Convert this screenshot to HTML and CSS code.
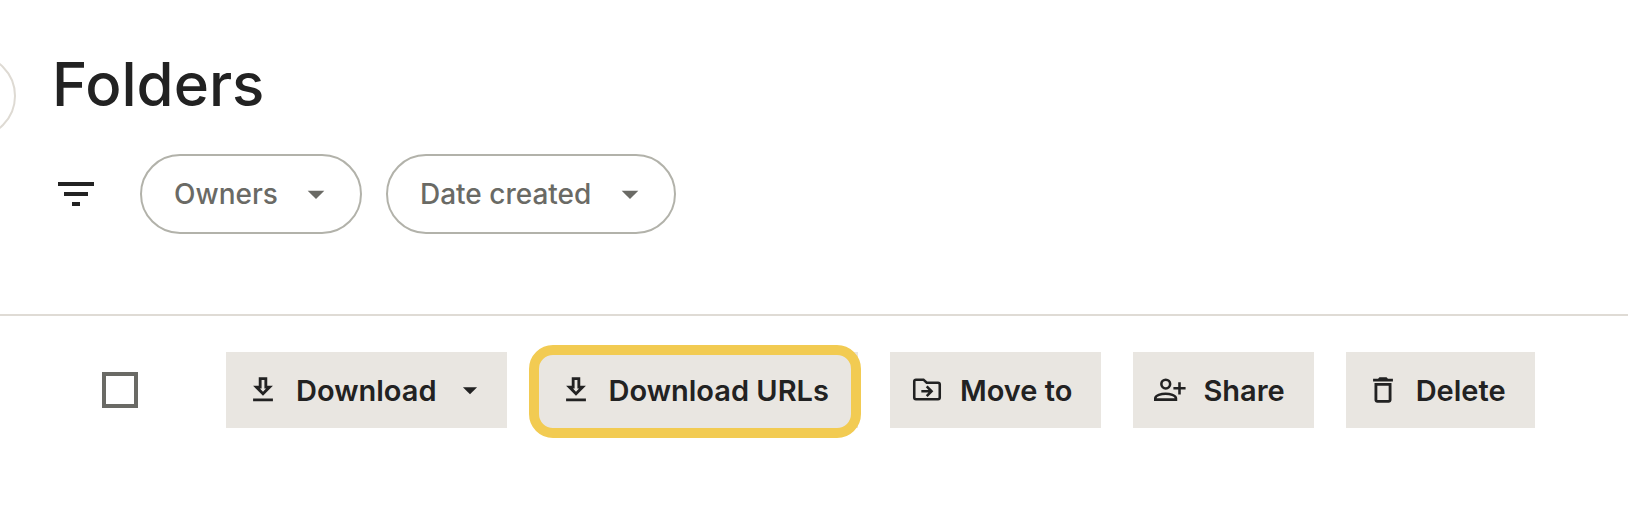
FILE: index.html
```html
<!DOCTYPE html>
<html lang="en">
<head>
    <meta charset="UTF-8">
    <meta name="viewport" content="width=device-width, initial-scale=1.0">
    <title>Folders</title>
    <link rel="stylesheet" href="styles.css">
</head>
<body>
    <main class="page">
        <button class="side_toggle" type="button" aria-label="Toggle sidebar"></button>

        <header class="header">
            <h1 class="title">Folders</h1>
            <div class="filters">
                <svg class="filter_icon" viewBox="0 0 24 24" aria-hidden="true"><path d="M10 18h4v-2h-4v2zM3 6v2h18V6H3zm3 7h12v-2H6v2z"/></svg>
                <div class="filter">
                    <select class="filter_select" aria-label="Owners">
                        <option>Owners</option>
                    </select>
                    <svg class="filter_arrow" viewBox="0 0 24 24" aria-hidden="true"><path d="M7 10l5 5 5-5z"/></svg>
                </div>
                <div class="filter">
                    <select class="filter_select" aria-label="Date created">
                        <option>Date created</option>
                    </select>
                    <svg class="filter_arrow" viewBox="0 0 24 24" aria-hidden="true"><path d="M7 10l5 5 5-5z"/></svg>
                </div>
            </div>
        </header>

        <div class="toolbar">
            <input class="select_all" type="checkbox" aria-label="Select all">
            <div class="actions">
                <button class="action action_menu" type="button" aria-haspopup="true">
                    <svg class="icon" viewBox="0 0 24 24" aria-hidden="true"><path d="M19 9h-4V3H9v6H5l7 7 7-7zm-8 2V5h2v6h1.17L12 13.17 9.83 11H11zm-6 7h14v2H5z"/></svg>
                    <span class="action_text">Download</span>
                    <svg class="icon" viewBox="0 0 24 24" aria-hidden="true"><path d="M7 10l5 5 5-5z"/></svg>
                </button>
                <button class="action highlight" type="button">
                    <svg class="icon" viewBox="0 0 24 24" aria-hidden="true"><path d="M19 9h-4V3H9v6H5l7 7 7-7zm-8 2V5h2v6h1.17L12 13.17 9.83 11H11zm-6 7h14v2H5z"/></svg>
                    <span class="action_text">Download URLs</span>
                </button>
                <button class="action" type="button">
                    <svg class="icon icon_stroke" viewBox="0 0 24 24" aria-hidden="true"><path d="M4.200 4.700h5.300l2.300 2.200h8q1.200 0 1.200 1.200v9.200q0 1.200-1.200 1.200H4.200q-1.200 0-1.200-1.200V5.900q0-1.200 1.200-1.200zM8 12.900h7M11.800 9.500l3.400 3.400-3.400 3.400"/></svg>
                    <span class="action_text">Move to</span>
                </button>
                <button class="action" type="button">
                    <svg class="icon icon_stroke" viewBox="0 0 24 24" aria-hidden="true"><circle cx="9" cy="7.800" r="3.100"/><path d="M1.600 18.800v-1c0-2 4.200-3.200 7.300-3.200s7.300 1.200 7.300 3.200v1zM18.700 6.500v8.600M14.400 10.800H23"/></svg>
                    <span class="action_text">Share</span>
                </button>
                <button class="action" type="button">
                    <svg class="icon" viewBox="0 0 24 24" aria-hidden="true"><path d="M6 19c0 1.100.9 2 2 2h8c1.100 0 2-.9 2-2V7H6v12zM8 9h8v10H8V9zm7.500-5l-1-1h-5l-1 1H5v2h14V4z"/></svg>
                    <span class="action_text">Delete</span>
                </button>
            </div>
        </div>
    </main>
</body>
</html>
```
FILE: styles.css
```css
* {
    margin: 0;
    padding: 0;
    box-sizing: border-box;
}

body {
    font-family: Inter, "Liberation Sans", sans-serif;
    color: #222;
    background-color: #fff;
}

.page {
    position: relative;
    overflow: hidden;
}

/* round handle of the sidebar, half hidden by the left edge */
.side_toggle {
    position: absolute;
    top: 54px;
    left: -68px;
    width: 84px;
    height: 84px;
    border: 2px solid #dedad3;
    border-radius: 50%;
    background-color: #fff;
}

.header {
    padding: 50px 52px 80px;
    border-bottom: 2px solid #dfdbd5;
}

.title {
    font-size: 60px;
    font-weight: 500;
    line-height: 68px;
}

.filters {
    display: flex;
    align-items: center;
    gap: 24px;
    margin-top: 36px;
}

.filter_icon {
    width: 48px;
    height: 48px;
    margin-right: 16px;
    fill: #222;
}

.filter {
    display: grid;
    align-items: center;
}

.filter_select {
    grid-area: 1 / 1;
    height: 80px;
    padding: 0 82px 0 32px;
    border: 2px solid #b2b2aa;
    border-radius: 40px;
    font-family: inherit;
    font-size: 28px;
    font-weight: 500;
    color: #6a6a65;
    background-color: transparent;
    appearance: none;
    cursor: pointer;
}

.filter_arrow {
    grid-area: 1 / 1;
    justify-self: end;
    width: 40px;
    height: 40px;
    margin-right: 26px;
    fill: #6a6a65;
    pointer-events: none;
}

.toolbar {
    display: flex;
    align-items: center;
    gap: 88px;
    padding: 36px 92px 36px 102px;
}

.select_all {
    flex: none;
    width: 36px;
    height: 36px;
    border: 4px solid #6a6a65;
    appearance: none;
    cursor: pointer;
}

.actions {
    display: flex;
    gap: 32px;
}

.action {
    display: flex;
    align-items: center;
    gap: 16px;
    height: 76px;
    padding: 0 29px 0 20px;
    border: none;
    font-family: inherit;
    font-size: 29px;
    font-weight: 600;
    color: #222;
    background-color: #e9e6e1;
    white-space: nowrap;
    cursor: pointer;
}

.action_menu {
    padding-right: 20px;
}

.icon {
    flex: none;
    width: 34px;
    height: 34px;
    fill: currentColor;
}

.icon_stroke {
    fill: none;
    stroke: currentColor;
    stroke-width: 1.8;
}

.highlight {
    position: relative;
}

/* yellow frame round the button */
.highlight::after {
    content: "";
    position: absolute;
    top: -7px;
    right: -3px;
    bottom: -10px;
    left: -10px;
    border: 10px solid #f2cb52;
    border-radius: 24px;
}
```
